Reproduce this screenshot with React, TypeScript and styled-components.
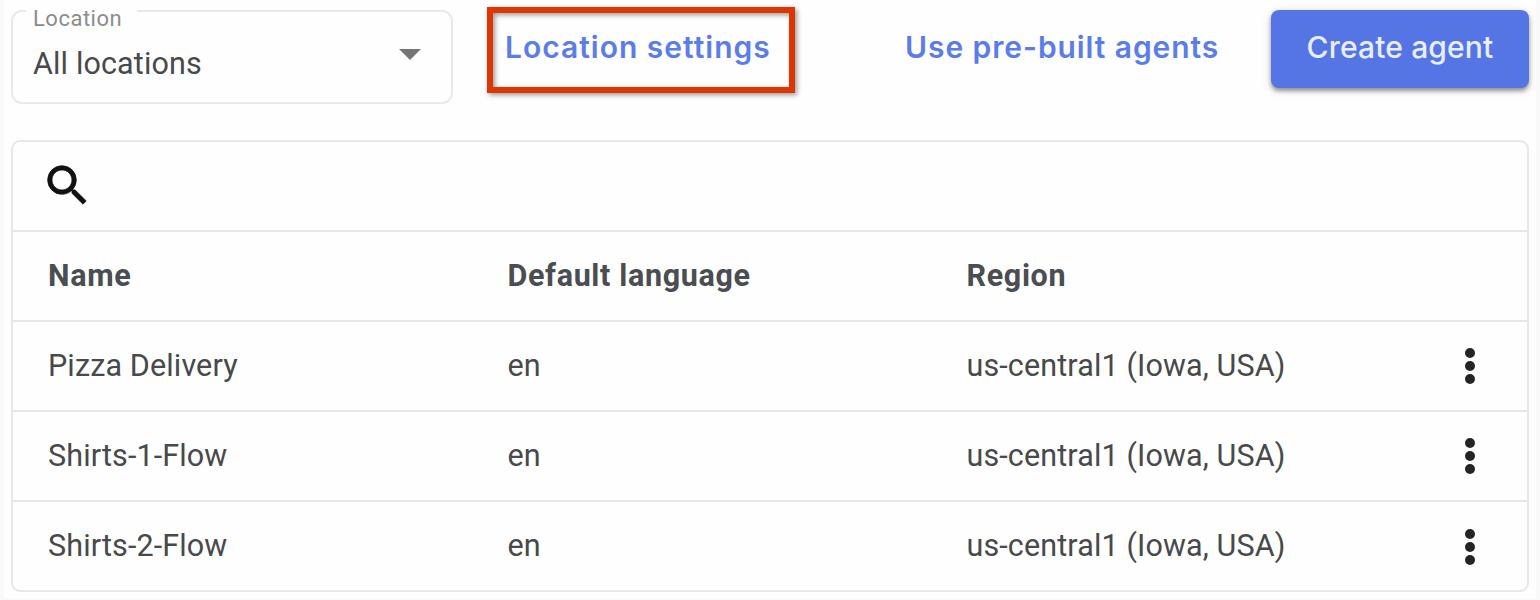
import React from "react";
import styled, { createGlobalStyle } from "styled-components";

const GlobalStyle = createGlobalStyle`
  * { box-sizing: border-box; }
  body {
    margin: 0;
    background: #fefefe;
    font-family: Roboto, "Liberation Sans", sans-serif;
    color: #3c4043;
  }
`;

const Page = styled.main`
  width: 1540px;
  height: 600px;
  overflow: hidden;
  padding: 10px 7px 0;
  border: solid #f9f9fa;
  border-width: 0 4px 2px;
`;

const Toolbar = styled.header`
  display: flex;
  align-items: flex-start;
  height: 130px;
`;

const LocationSelect = styled.div`
  position: relative;
  display: flex;
  align-items: center;
  justify-content: space-between;
  width: 442px;
  height: 94px;
  padding: 13px 30px 0 20px;
  border: 2px solid #e9e9ea;
  border-radius: 11px;
`;

const SelectLabel = styled.span`
  position: absolute;
  top: -6px;
  left: 13px;
  width: 111px;
  padding-left: 7px;
  background: #fefefe;
  font-size: 22px;
  line-height: 26px;
  letter-spacing: 0.5px;
  color: #8c8c8c;
`;

const SelectValue = styled.span`
  font-size: 30.5px;
  line-height: 36px;
  letter-spacing: 0.15px;
  color: #48494b;
`;

const Caret = styled.svg`
  width: 22px;
  height: 11px;
  margin-top: -18px;
  fill: #757575;
`;

const TextButton = styled.button<{ $spacing: number }>`
  padding: 0;
  border: 0;
  background: none;
  font: 600 30px/36px Inter, "Open Sans", sans-serif;
  letter-spacing: ${(p) => p.$spacing}px;
  white-space: nowrap;
  color: #5b7de9;
`;

const Highlight = styled.div`
  display: flex;
  width: 308px;
  height: 86px;
  margin: -3px 0 0 34px;
  padding: 16px 0 0 12px;
  align-items: flex-start;
  border: 6px solid #de3603;
  box-shadow: 2px 2px 5px rgba(0, 0, 0, 0.4), inset 2px 2px 5px rgba(0, 0, 0, 0.4);
`;

const Prebuilt = styled.div`
  display: flex;
  margin: 19px 0 0 110px;
`;

const CreateButton = styled.button`
  width: 258px;
  height: 78px;
  margin-left: auto;
  padding: 0 0 4px;
  border: 0;
  border-radius: 8px;
  background: #5575e5;
  box-shadow: 0 3px 4px rgba(0, 0, 0, 0.38), 0 2px 12px rgba(0, 0, 0, 0.12);
  font: 500 30px/36px Inter, "Open Sans", sans-serif;
  letter-spacing: 0.15px;
  white-space: nowrap;
  color: #e8eeff;
`;

const Table = styled.section`
  width: 1518px;
  height: 452px;
  border: 2px solid #e8e8eb;
  border-radius: 9px;
`;

const Row = styled.div<{ $header?: boolean }>`
  display: grid;
  grid-template-columns: 459.5px 459px 1fr 48px;
  align-items: center;
  height: 90px;
  padding: 0 33px 0 35px;
  border-bottom: 2px solid #e6e6e8;
  font-size: 30.5px;
  font-weight: ${(p) => (p.$header ? 700 : 400)};
  letter-spacing: ${(p) => (p.$header ? 0.65 : 0.13)}px;
  color: ${(p) => (p.$header ? "#4a4d51" : "#48494b")};

  &:last-child {
    height: 88px;
    border-bottom: 0;
  }
`;

const Cell = styled.span`
  line-height: 36px;
  white-space: nowrap;
`;

const SearchIcon = styled.svg`
  width: 53px;
  height: 53px;
  margin: -2px 0 0 -7px;
  fill: #111;
  stroke: #111;
  stroke-width: 0.3;
  stroke-linejoin: round;
`;

const MoreIcon = styled.svg`
  width: 12px;
  height: 38px;
  justify-self: center;
  fill: #242424;

  ${Row}:last-child & {
    margin-top: 2px;
  }
`;

const agents = ["Pizza Delivery", "Shirts-1-Flow", "Shirts-2-Flow"];

export default function App() {
  return (
    <>
      <GlobalStyle />
      <Page>
        <Toolbar>
          <LocationSelect>
            <SelectLabel>Location</SelectLabel>
            <SelectValue>All locations</SelectValue>
            <Caret viewBox="0 0 22 11">
              <path d="M0 0h22L11 11z" />
            </Caret>
          </LocationSelect>
          <Highlight>
            <TextButton $spacing={1}>Location settings</TextButton>
          </Highlight>
          <Prebuilt>
            <TextButton $spacing={0.92}>Use pre-built agents</TextButton>
          </Prebuilt>
          <CreateButton>Create agent</CreateButton>
        </Toolbar>
        <Table>
          <Row>
            <SearchIcon viewBox="0 0 24 24">
              <path d="M15.5 14h-.79l-.28-.27A6.471 6.471 0 0 0 16 9.5 6.5 6.5 0 1 0 9.5 16c1.61 0 3.09-.59 4.23-1.57l.27.28v.79l5 4.99L20.49 19l-4.99-5zm-6 0C7.01 14 5 11.99 5 9.5S7.01 5 9.5 5 14 7.01 14 9.5 11.99 14 9.5 14z" />
            </SearchIcon>
          </Row>
          <Row $header>
            <Cell>Name</Cell>
            <Cell>Default language</Cell>
            <Cell>Region</Cell>
          </Row>
          {agents.map((name) => (
            <Row key={name}>
              <Cell>{name}</Cell>
              <Cell>en</Cell>
              <Cell>us-central1 (Iowa, USA)</Cell>
              <MoreIcon viewBox="0 0 12 38">
                <circle cx="6" cy="6" r="5" />
                <circle cx="6" cy="19" r="5" />
                <circle cx="6" cy="32" r="5" />
              </MoreIcon>
            </Row>
          ))}
        </Table>
      </Page>
    </>
  );
}
